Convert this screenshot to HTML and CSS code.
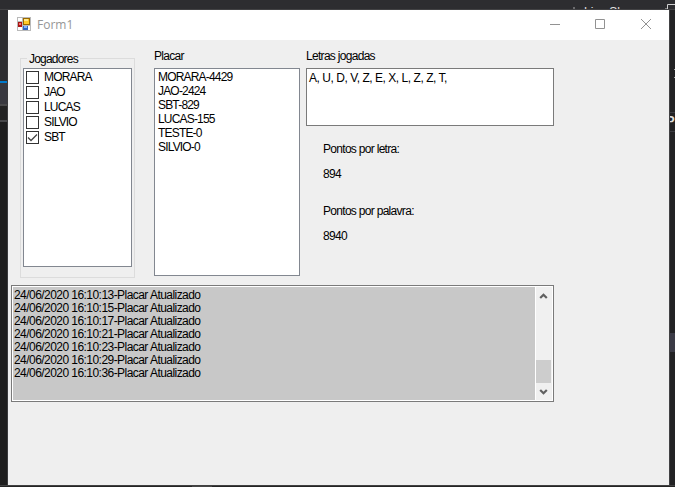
FILE: index.html
```html
<!DOCTYPE html>
<html lang="pt-BR">
<head>
<meta charset="utf-8">
<title>Form1</title>
<link rel="stylesheet" href="styles.css">
</head>
<body>
<div class="desktop">
  <header class="ide-top">
    <svg class="share-icon" width="8" height="4" viewBox="0 0 8 4"><path d="M4 0V4M1 3H7" stroke="#aaa" fill="none"/></svg>
    <span class="live">Live Share</span>
    <svg class="account" width="11" height="10" viewBox="0 0 11 10"><path d="M3.500 10V4.500H11" stroke="#d0d0d0" fill="none"/><path d="M0 10Q2 7 4 10" stroke="#aaa" fill="none"/></svg>
  </header>
  <aside class="ide-left">
    <i class="accent"></i><i class="tab"></i><i class="rule"></i><i class="gap"></i><i class="rule"></i>
  </aside>
  <main class="window">
    <header class="titlebar">
      <svg width="14" height="14" viewBox="0 0 14 14">
        <path fill="#b9b9b9" d="M0 0H14V14H0z"/><path fill="#fff" d="M1 1H5V4H1zM1 10H5V13H1zM11 9H13V13H11z"/>
        <path fill="#a91313" d="M1 5H5V10H1z"/><path fill="#ef7770" d="M2 6H4V8H2z"/>
        <path fill="#9b6a00" d="M6 1H13V8H6z"/><path fill="#ffca28" d="M7 2H12V7H7z"/><path fill="#ffe88a" d="M7 2H11V4H7z"/>
        <path fill="#2f66c4" d="M6 9H11V13H6z"/><path fill="#83b4ff" d="M7 9H10V11H7z"/>
      </svg>
      <h1>Form1</h1>
      <svg class="controls" width="102" height="12" viewBox="0 0 102 12" fill="none" stroke="#929292"><path d="M0 6.500H10M45.500 1.500H54.500V10.500H45.500z"/><path d="M91 1L101 11M101 1L91 11"/></svg>
    </header>
    <div class="client">
      <div class="columns">
        <section class="group">
          <h2 class="legend">Jogadores</h2>
          <ul class="list checks">
            <li><i class="box"></i>MORARA</li>
            <li><i class="box"></i>JAO</li>
            <li><i class="box"></i>LUCAS</li>
            <li><i class="box"></i>SILVIO</li>
            <li><i class="box"><svg width="11" height="11" viewBox="0 0 11 11"><path d="M1 5.500L4 8.500L10 2.500" fill="none" stroke="#444" stroke-width="1.300"/></svg></i>SBT</li>
          </ul>
        </section>
        <section class="scores">
          <h2>Placar</h2>
          <ul class="list">
            <li>MORARA-4429</li><li>JAO-2424</li><li>SBT-829</li><li>LUCAS-155</li><li>TESTE-0</li><li>SILVIO-0</li>
          </ul>
        </section>
        <section class="letters">
          <h2>Letras jogadas</h2>
          <div class="played">A, U, D, V, Z, E, X, L, Z, Z, T,</div>
          <dl>
            <dt>Pontos por letra:</dt><dd>894</dd>
            <dt>Pontos por palavra:</dt><dd>8940</dd>
          </dl>
        </section>
      </div>
      <div class="log">
        <ol>
          <li>24/06/2020 16:10:13-Placar Atualizado</li>
          <li>24/06/2020 16:10:15-Placar Atualizado</li>
          <li>24/06/2020 16:10:17-Placar Atualizado</li>
          <li>24/06/2020 16:10:21-Placar Atualizado</li>
          <li>24/06/2020 16:10:23-Placar Atualizado</li>
          <li>24/06/2020 16:10:29-Placar Atualizado</li>
          <li>24/06/2020 16:10:36-Placar Atualizado</li>
        </ol>
        <div class="scrollbar">
          <svg width="15" height="17" viewBox="0 0 15 17"><path d="M4.200 11L7.500 7.700L10.800 11" fill="none" stroke="#606060" stroke-width="2.200"/></svg>
          <i class="thumb"></i>
          <svg width="15" height="17" viewBox="0 0 15 17"><path d="M4.200 7L7.500 10.300L10.800 7" fill="none" stroke="#606060" stroke-width="2.200"/></svg>
        </div>
      </div>
    </div>
  </main>
  <aside class="ide-right"><i class="more"></i><span class="pane">P</span><i class="selected"></i></aside>
  <footer class="ide-bottom"><i></i></footer>
</div>
</body>
</html>
```
FILE: styles.css
```css
* { box-sizing: border-box; }
body { margin: 0; }
ul, ol, dl, dd, h1, h2 { margin: 0; padding: 0; list-style: none; font: inherit; }
i { display: block; flex: none; }
svg { display: block; flex: none; }
.desktop {
  width: 675px; height: 487px; overflow: hidden;
  display: grid; grid-template: 10px 475px 2px / 8px 661px 6px;
  background: #1e1e1e;
  font: 12px/14px "Liberation Sans", Arial, sans-serif;
  letter-spacing: -.82px; color: #000;
}
.ide-top {
  grid-column: 1 / -1; display: flex; width: 675px; overflow: hidden;
  padding-left: 570px; background: #2d2d30; border-bottom: 1px solid #424244;
}
.share-icon { margin-top: 7px; }
.live { margin: 5px 0 0 6px; width: 80px; font-size: 12px; color: #e0e0e0; letter-spacing: 0; white-space: nowrap; }
.ide-left { background: #1e1e1e; border-top: 71px solid #2d2d30; border-right: 1px solid #3b3b3d; }
.accent { height: 2px; background: #007acc; }
.tab { height: 21px; background: #38383f; }
.rule { height: 2px; background: #48484a; }
.gap { height: 14px; background: #222; }
.ide-right { display: flex; flex-direction: column; width: 6px; overflow: hidden; background: #222224; border-left: 1px solid #424244; }
.more { height: 9px; margin: 59px 0 0 4px; border: solid #aaa; border-width: 1px 0; }
.pane { height: 20px; margin: 34px 0 0 -4px; border: solid #3c3c42; border-width: 1px 0; padding-top: 1px; font-size: 13px; font-weight: bold; color: #ddd; }
.selected { height: 19px; margin-top: 201px; background: #3b3b46; }
.ide-bottom { grid-column: 1 / -1; background: #242424; border-top: 1px solid #414141; }
.ide-bottom i { width: 20px; height: 2px; margin-left: 192px; background: #444; }
.window { display: flex; flex-direction: column; background: #efefef; }
.titlebar { display: flex; height: 30px; padding: 7px 17px 0 9px; background: #fff; }
.titlebar h1 { margin-left: 6px; font: 12px/16px "Open Sans", sans-serif; letter-spacing: 0; color: #969696; }
.controls { margin: 1px 0 0 auto; }
.client { padding: 9px 0 0 3px; }
.columns { display: flex; height: 236px; }
.group { width: 115px; height: 220px; margin: 9px 0 0 9px; padding: 0 2px; border: 1px solid #dcdcdc; }
h2 { height: 14px; letter-spacing: -.7px; }
.legend { width: 53px; margin: -7px 0 2px 4px; padding-left: 2px; letter-spacing: -.8px; white-space: nowrap; background: #efefef; }
.list { background: #fff; border: 1px solid #828790; }
.checks { width: 109px; height: 199px; padding: 1px 0 0 2px; }
.checks li { display: flex; height: 15px; }
.box { width: 13px; height: 13px; margin: 1px 5px 0 0; border: 1px solid #333; }
.scores { width: 146px; margin-left: 19px; }
.scores h2, .letters h2 { margin-bottom: 5px; }
.scores .list { height: 208px; padding: 1px 3px; }
.letters { width: 248px; margin-left: 6px; }
.played { height: 58px; padding: 2px; border: 1px solid #7a7a7a; background: #fff; letter-spacing: -.46px; }
dl { padding: 16px 0 0 17px; letter-spacing: -.7px; }
dd { margin: 11px 0 23px; }
.log { display: flex; width: 543px; height: 117px; padding: 1px; border: 1px solid #7a7a7a; background: #fff; }
.log ol { width: 522px; padding: 2px 0 0 1px; background: #c8c8c8; line-height: 13px; letter-spacing: -.55px; }
.scrollbar { display: flex; flex-direction: column; width: 16px; margin-left: 1px; background: #f0f0f0; }
.thumb { width: 15px; height: 23px; margin-top: auto; background: #cdcdcd; }
```
